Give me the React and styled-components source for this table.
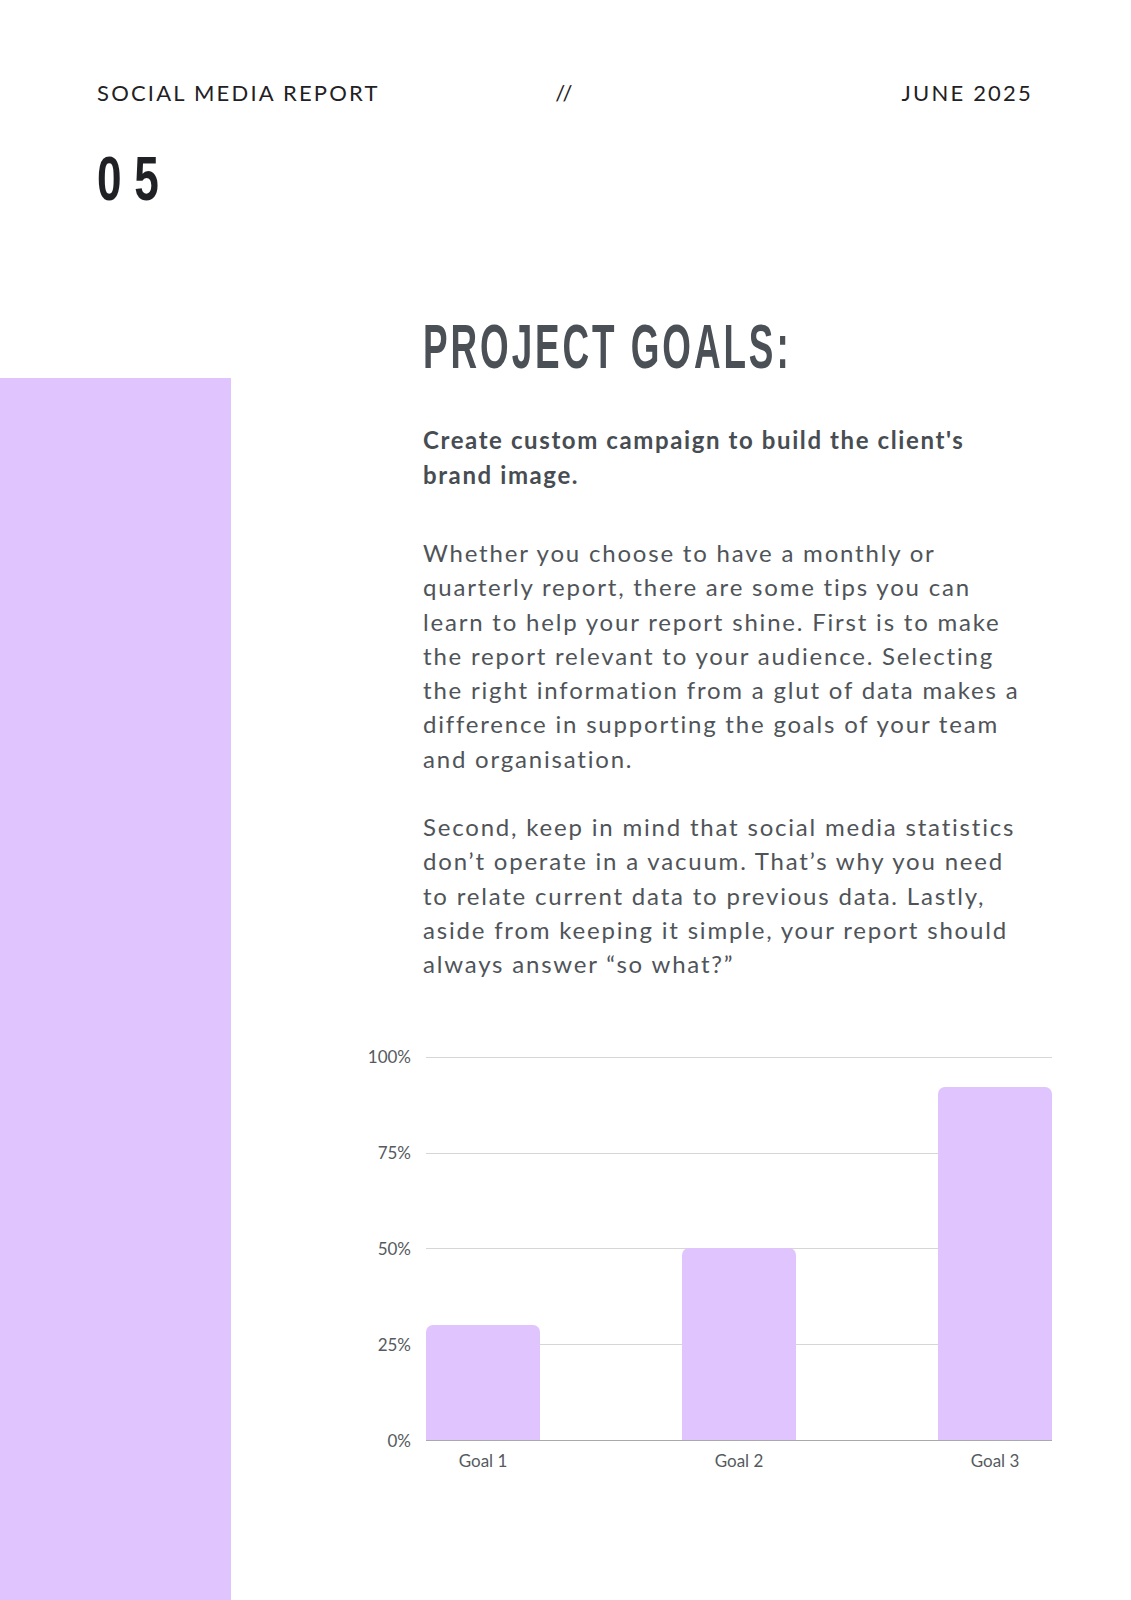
import React from "react";
import styled, { createGlobalStyle } from "styled-components";

const GlobalStyle = createGlobalStyle`
  html, body { margin: 0; padding: 0; background: #ffffff; }
  body { font-family: "Lato", "Noto Sans", sans-serif; }
`;

const Page = styled.div`
  width: 1131px;
  min-height: 1600px;
  display: flex;
  flex-direction: column;
  background: #ffffff;
  overflow: hidden;
`;

const Top = styled.header`
  padding: 79px 98px 0 97px;
`;

const HeaderRow = styled.div`
  display: grid;
  grid-template-columns: 1fr auto 1fr;
  align-items: center;
  font-family: "Lato", sans-serif;
  font-size: 22px;
  line-height: 28px;
  letter-spacing: 2.2px;
  color: #1f2124;
`;

const HeaderCell = styled.div`
  text-align: ${(p) => p.$align || "left"};
`;

const Condensed = styled.span`
  display: inline-block;
  transform: scaleX(${(p) => p.$scale || 0.6});
  transform-origin: left center;
  white-space: nowrap;
`;

const PageNumber = styled.div`
  margin-top: 36px;
  font-family: "Liberation Sans", "Noto Sans", sans-serif;
  font-weight: 700;
  font-size: 63px;
  line-height: 70px;
  letter-spacing: 18px;
  color: #1f2124;
`;

const Body = styled.div`
  flex: 1;
  display: grid;
  grid-template-columns: 231px 1fr;
  margin-top: 98px;
`;

const Sidebar = styled.div`
  margin-top: 67px;
  background: #e0c4fd;
`;

const Main = styled.main`
  padding: 0 79px 0 192px;
  display: flex;
  flex-direction: column;
`;

const Title = styled.h1`
  margin: 0;
  font-family: "Liberation Sans", "Noto Sans", sans-serif;
  font-weight: 700;
  font-size: 63px;
  line-height: 70px;
  letter-spacing: 5px;
  color: #4a5055;
`;

const Lead = styled.p`
  margin: 42px 0 0;
  font-family: "Lato", sans-serif;
  font-weight: 700;
  font-size: 24px;
  line-height: 34.5px;
  letter-spacing: 1.6px;
  color: #474d52;
  white-space: nowrap;
`;

const Para = styled.p`
  margin: ${(p) => p.$gap}px 0 0;
  font-family: "Lato", sans-serif;
  font-weight: 400;
  font-size: 24px;
  line-height: 34.3px;
  letter-spacing: 1.8px;
  color: #4f5459;
  white-space: nowrap;
`;

const Chart = styled.div`
  margin: 75px 0 0 -56px;
  display: grid;
  grid-template-columns: 44px 626px;
  column-gap: 15px;
`;

const YAxis = styled.div`
  margin-top: -10px;
  height: 404px;
  display: flex;
  flex-direction: column;
  justify-content: space-between;
  align-items: flex-end;
`;

const AxisLabel = styled.span`
  font-family: "Lato", sans-serif;
  font-size: 17px;
  line-height: 20px;
  color: #555a5e;
`;

const Plot = styled.div`
  height: 383px;
  display: flex;
  align-items: flex-end;
  justify-content: space-between;
  border-bottom: 1px solid #a9a9a9;
  background: repeating-linear-gradient(
    to bottom,
    #d6d6d6 0,
    #d6d6d6 1px,
    transparent 1px,
    transparent 95.75px
  );
`;

const Bar = styled.div`
  width: 114px;
  background: #e0c4fd;
  border-radius: 7px 7px 0 0;
`;

const XAxis = styled.div`
  grid-column: 2;
  display: flex;
  justify-content: space-between;
  margin-top: 0;
`;

const XLabel = styled(AxisLabel)`
  width: 114px;
  text-align: center;
`;

const goals = [
  { label: "Goal 1", value: 30 },
  { label: "Goal 2", value: 50 },
  { label: "Goal 3", value: 92 },
];

const ticks = ["100%", "75%", "50%", "25%", "0%"];

export default function App() {
  return (
    <>
      <GlobalStyle />
      <Page>
        <Top>
          <HeaderRow>
            <HeaderCell>SOCIAL MEDIA REPORT</HeaderCell>
            <HeaderCell $align="center">//</HeaderCell>
            <HeaderCell $align="right">JUNE 2025</HeaderCell>
          </HeaderRow>
          <PageNumber>
            <Condensed $scale={0.7}>05</Condensed>
          </PageNumber>
        </Top>
        <Body>
          <Sidebar />
          <Main>
            <Title>
              <Condensed $scale={0.585}>PROJECT GOALS:</Condensed>
            </Title>
            <Lead>
              Create custom campaign to build the client's
              <br />
              brand image.
            </Lead>
            <Para $gap={44}>
              Whether you choose to have a monthly or
              <br />
              quarterly report, there are some tips you can
              <br />
              learn to help your report shine. First is to make
              <br />
              the report relevant to your audience. Selecting
              <br />
              the right information from a glut of data makes a
              <br />
              difference in supporting the goals of your team
              <br />
              and organisation.
            </Para>
            <Para $gap={34}>
              Second, keep in mind that social media statistics
              <br />
              don’t operate in a vacuum. That’s why you need
              <br />
              to relate current data to previous data. Lastly,
              <br />
              aside from keeping it simple, your report should
              <br />
              always answer “so what?”
            </Para>
            <Chart>
              <YAxis>
                {ticks.map((t) => (
                  <AxisLabel key={t}>{t}</AxisLabel>
                ))}
              </YAxis>
              <Plot>
                {goals.map((g) => (
                  <Bar key={g.label} style={{ height: `${g.value}%` }} />
                ))}
              </Plot>
              <XAxis>
                {goals.map((g) => (
                  <XLabel key={g.label}>{g.label}</XLabel>
                ))}
              </XAxis>
            </Chart>
          </Main>
        </Body>
      </Page>
    </>
  );
}
